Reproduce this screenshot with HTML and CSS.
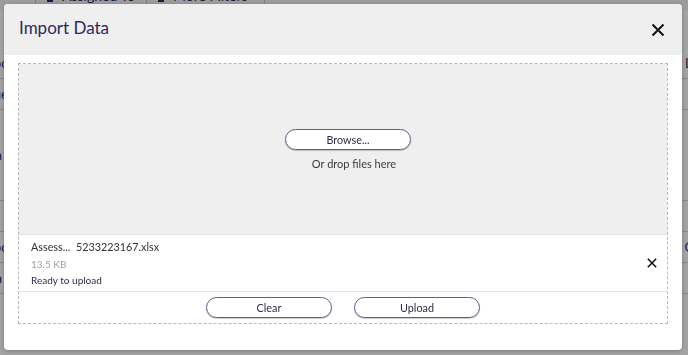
FILE: index.html
```html
<!DOCTYPE html>
<html lang="en">
<head>
    <meta charset="UTF-8">
    <title>Import Data</title>
    <link rel="stylesheet" href="styles.css">
</head>
<body>
    <div class="page">
        <div class="toolbar">
            <div class="tool"><span class="tool-icon"></span>Assigned To</div>
            <div class="tool"><span class="tool-icon"></span>More Filters</div>
        </div>
        <div class="rows">
            <div class="row"><span class="cell-left">Doc</span><span class="cell-right">Lin</span></div>
            <div class="row"><span class="cell-left">Due</span><span class="cell-right">Po</span></div>
            <div class="row tall"><span class="cell-left">Sta</span><span class="cell-right"></span></div>
            <div class="row"><span class="cell-left"></span><span class="cell-right"></span></div>
            <div class="row"><span class="cell-left">Doc</span><span class="cell-right">On</span></div>
            <div class="row"><span class="cell-left">Sta</span><span class="cell-right">In</span></div>
        </div>
    </div>

    <div class="overlay"></div>

    <div class="modal">
        <div class="modal-header">
            <h2>Import Data</h2>
            <button class="close-btn" aria-label="Close">
                <svg width="14" height="14" viewBox="0 0 14 14"><path d="M1.5 1.5L12.5 12.5M12.5 1.5L1.5 12.5" stroke="#111" stroke-width="2" fill="none"/></svg>
            </button>
        </div>
        <div class="modal-body">
            <div class="dropzone">
                <div class="drop-area">
                    <button class="pill">Browse...</button>
                    <div class="drop-hint">Or drop files here</div>
                </div>
                <div class="file-item">
                    <div class="file-info">
                        <div class="file-name">Assess...&nbsp; 5233223167.xlsx</div>
                        <div class="file-size">13.5 KB</div>
                        <div class="file-status">Ready to upload</div>
                    </div>
                    <button class="remove-btn" aria-label="Remove">
                        <svg width="10" height="10" viewBox="0 0 10 10"><path d="M0.8 0.8L9.2 9.2M9.2 0.8L0.8 9.2" stroke="#111" stroke-width="1.5" fill="none"/></svg>
                    </button>
                </div>
                <div class="actions">
                    <button class="pill">Clear</button>
                    <button class="pill">Upload</button>
                </div>
            </div>
        </div>
    </div>
</body>
</html>
```

FILE: styles.css
```css
html, body {
    margin: 0;
    padding: 0;
    height: 100%;
    overflow: hidden;
}
body {
    font-family: Lato, 'Open Sans', sans-serif;
    background-color: #ffffff;
    color: #333333;
}
.page {
    width: 688px;
}
.toolbar {
    display: flex;
    height: 30px;
    margin-top: -20px;
    padding-left: 35px;
    background-color: #f5f5f5;
}
.tool {
    display: flex;
    align-items: center;
    gap: 9px;
    padding-left: 11px;
    border-left: 1px solid #c8c8c8;
    font-size: 14px;
    color: #2b2d63;
}
.tool:first-child {
    width: 99px;
}
.tool:last-child {
    width: 106px;
    border-right: 1px solid #c8c8c8;
}
.tool-icon {
    width: 6px;
    height: 14px;
    background-color: #2b2d63;
}
.rows {
    padding-top: 38px;
}
.row {
    display: flex;
    justify-content: space-between;
    align-items: center;
    height: 30px;
    border-bottom: 1px solid #d6d6d6;
    font-size: 13px;
    color: #2b2d63;
}
.row.tall {
    height: 90px;
}
.cell-left {
    margin-left: -16px;
}
.cell-right {
    margin-right: -14px;
}
.overlay {
    position: fixed;
    inset: 0;
    background-color: rgba(0, 0, 0, 0.36);
}
.modal {
    position: fixed;
    top: 4px;
    left: 4px;
    width: 678px;
    height: 346px;
    background-color: #ffffff;
    border-radius: 4px;
    box-shadow: 0 1px 4px rgba(0, 0, 0, 0.25);
    overflow: hidden;
    display: flex;
    flex-direction: column;
}
.modal-header {
    display: flex;
    align-items: center;
    justify-content: space-between;
    height: 51px;
    padding: 0 17px 0 15px;
    background-color: #efefef;
}
.modal-header h2 {
    margin: 0 0 4px 0;
    font-size: 17px;
    font-weight: 400;
    color: #2b2a5c;
}
.close-btn, .remove-btn {
    border: none;
    background: none;
    padding: 0;
    cursor: pointer;
    display: flex;
}
.modal-body {
    padding: 8px 14px 0 14px;
}
.dropzone {
    border: 1px dashed #b8b8b8;
    height: 259px;
    display: flex;
    flex-direction: column;
}
.drop-area {
    height: 105px;
    background-color: #efefef;
    border-bottom: 1px solid #e2e2e2;
    display: flex;
    flex-direction: column;
    align-items: center;
    gap: 7px;
    padding: 65px 0 0 10px;
}
.pill {
    width: 126px;
    height: 21px;
    padding: 0;
    border: 1.5px solid #5e5c88;
    border-radius: 11px;
    background-color: #ffffff;
    font-family: Lato, sans-serif;
    font-size: 10.8px;
    color: #2a2b48;
    box-shadow: 0 1px 1px rgba(0, 0, 0, 0.2);
    cursor: pointer;
}
.drop-hint {
    font-size: 11px;
    line-height: 14px;
    color: #3c3c3c;
    padding-left: 12px;
}
.file-item {
    height: 56px;
    border-bottom: 1px solid #e2e2e2;
    display: flex;
    align-items: center;
    justify-content: space-between;
    padding: 0 10px 0 12px;
}
.file-name {
    color: #333333;
    font-size: 10.8px;
    line-height: 18px;
}
.file-size {
    color: #a0a0a0;
    font-size: 10px;
    line-height: 17px;
}
.file-status {
    color: #2b2d50;
    font-size: 10px;
    line-height: 15px;
}
.actions {
    flex: 1;
    display: flex;
    align-items: center;
    justify-content: center;
    gap: 22px;
}
```
